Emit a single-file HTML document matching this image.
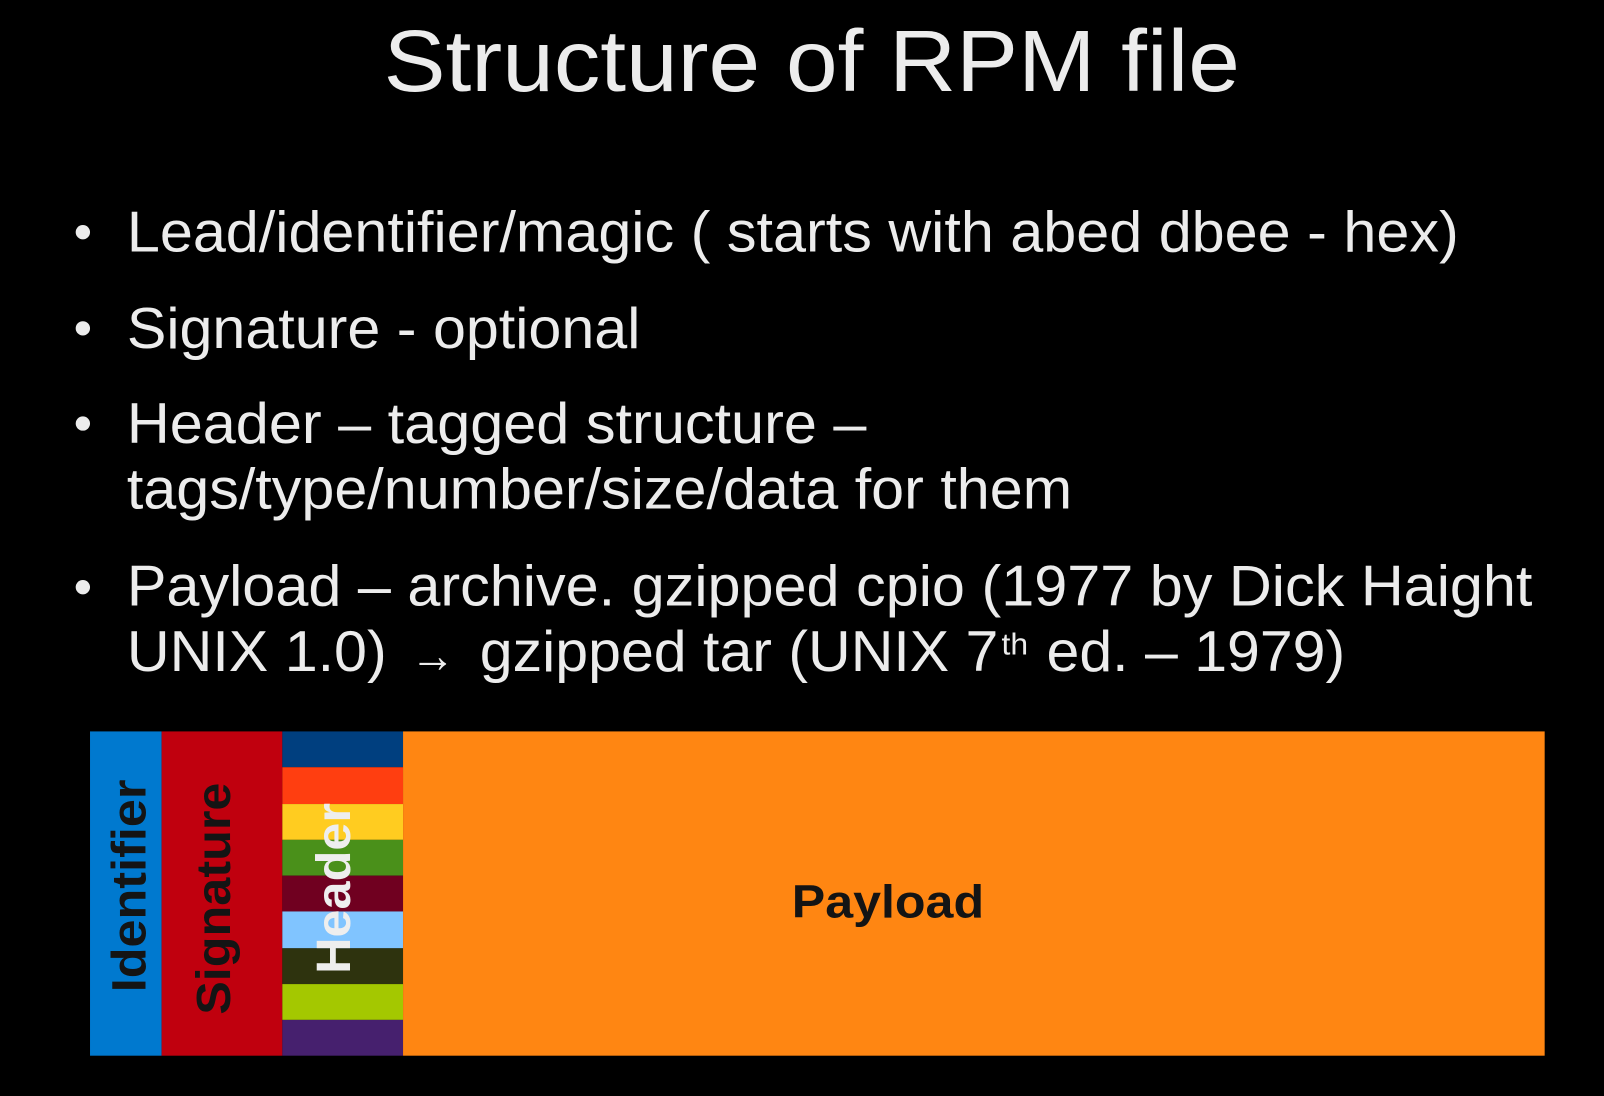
<!DOCTYPE html>
<html><head><meta charset="utf-8"><style>
html,body{margin:0;padding:0;background:#000;}
svg{display:block}
</style></head><body>
<svg width="1604" height="1096" viewBox="0 0 1604 1096" xmlns="http://www.w3.org/2000/svg" font-family="Liberation Sans, sans-serif">
<rect width="1604" height="1096" fill="#000"/>
<g transform="scale(1.02296)">
<text x="375" y="89" font-size="85" fill="#ececec" textLength="837" lengthAdjust="spacingAndGlyphs">Structure of RPM file</text>
<g fill="#ececec" font-size="56">
<circle cx="81" cy="227" r="7"/>
<circle cx="81" cy="321" r="7"/>
<circle cx="81" cy="414" r="7"/>
<circle cx="81" cy="574" r="7"/>
<text x="124" y="246" textLength="1302" lengthAdjust="spacingAndGlyphs">Lead/identifier/magic ( starts with abed dbee - hex)</text>
<text x="124" y="340" textLength="502" lengthAdjust="spacingAndGlyphs">Signature - optional</text>
<text x="124" y="433" textLength="723" lengthAdjust="spacingAndGlyphs">Header – tagged structure –</text>
<text x="124" y="497" textLength="924" lengthAdjust="spacingAndGlyphs">tags/type/number/size/data for them</text>
<text x="124" y="592" textLength="1374" lengthAdjust="spacingAndGlyphs">Payload – archive. gzipped cpio (1977 by Dick Haight</text>
<text x="124" y="656" textLength="254" lengthAdjust="spacingAndGlyphs">UNIX 1.0)</text>
<text x="401" y="657" font-size="48" textLength="44" lengthAdjust="spacingAndGlyphs">→</text>
<text x="469" y="656" textLength="507" lengthAdjust="spacingAndGlyphs">gzipped tar (UNIX 7</text>
<text x="979" y="640" font-size="30" textLength="26" lengthAdjust="spacingAndGlyphs">th</text>
<text x="1023" y="656" textLength="292" lengthAdjust="spacingAndGlyphs">ed. – 1979)</text>
</g>
<rect x="88" y="715" width="70" height="317" fill="#0079cf"/>
<rect x="158" y="715" width="118" height="317" fill="#c0000e"/>
<rect x="276" y="715" width="118" height="35" fill="#003f7f"/>
<rect x="276" y="750" width="118" height="36" fill="#ff3e10"/>
<rect x="276" y="786" width="118" height="35" fill="#ffcc20"/>
<rect x="276" y="821" width="118" height="35" fill="#4a901a"/>
<rect x="276" y="856" width="118" height="35" fill="#700020"/>
<rect x="276" y="891" width="118" height="36" fill="#80c4ff"/>
<rect x="276" y="927" width="118" height="35" fill="#2e330e"/>
<rect x="276" y="962" width="118" height="35" fill="#a4c800"/>
<rect x="276" y="997" width="118" height="35" fill="#46206e"/>
<rect x="394" y="715" width="1116" height="317" fill="#ff8612"/>
<g font-weight="bold" font-size="47">
<text transform="translate(142,970) rotate(-90)" fill="#141414" textLength="208" lengthAdjust="spacingAndGlyphs">Identifier</text>
<text transform="translate(225,992) rotate(-90)" fill="#141414" textLength="227" lengthAdjust="spacingAndGlyphs">Signature</text>
<text transform="translate(342,952) rotate(-90)" fill="#eeeeee" textLength="167" lengthAdjust="spacingAndGlyphs">Header</text>
<text x="774" y="897" font-size="45" fill="#141414" textLength="188" lengthAdjust="spacingAndGlyphs">Payload</text>
</g>
</g>
</svg>
</body></html>
